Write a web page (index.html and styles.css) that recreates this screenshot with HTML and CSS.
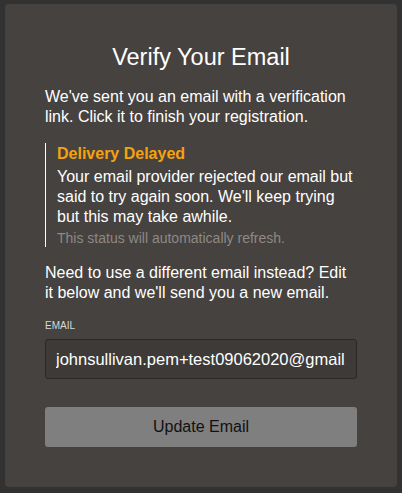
FILE: index.html
```html
<!DOCTYPE html>
<html lang="en">
    <head>
        <meta charset="UTF-8">
        <meta name="viewport" content="width=device-width, initial-scale=1.0">
        <title>Verify Your Email</title>
        <link rel="stylesheet" href="styles.css">
    </head>
    <body>
        <div class="card">
            <h1>Verify Your Email</h1>
            <p class="intro">We've sent you an email with a verification link. Click it to finish your registration.</p>
            <div class="status">
                <div class="statusTitle">Delivery Delayed</div>
                <p class="statusText">Your email provider rejected our email but said to try again soon. We'll keep trying but this may take awhile.</p>
                <div class="statusNote">This status will automatically refresh.</div>
            </div>
            <p class="intro">Need to use a different email instead? Edit it below and we'll send you a new email.</p>
            <label class="label" for="email">EMAIL</label>
            <input class="field" id="email" type="text" value="johnsullivan.pem+test09062020@gmail.com">
            <button class="button">Update Email</button>
        </div>
    </body>
</html>
```

FILE: styles.css
```css
body {
    margin: 0;
    background: #323232;
    font-family: "Liberation Sans", Arial, sans-serif;
    color: #fff;
}

.card {
    margin: 4px 5px 6px 5px;
    height: 483px;
    box-sizing: border-box;
    background: #46423f;
    border-radius: 4px;
    padding: 40px 40px 0 40px;
    display: flex;
    flex-direction: column;
}

h1 {
    margin: 0 0 17px 0;
    font-size: 23.5px;
    font-weight: normal;
    text-align: center;
    line-height: 26px;
}

.intro {
    margin: 0;
    font-size: 16px;
    line-height: 20px;
}

.status {
    margin: 16px 0 16px 0;
    border-left: 1px solid #fff;
    padding: 1px 0 1px 11px;
}

.statusTitle {
    color: #f5a20f;
    font-weight: bold;
    font-size: 16px;
    line-height: 19px;
    margin-bottom: 4px;
}

.statusText {
    margin: 0 0 3px 0;
    font-size: 16px;
    line-height: 20px;
}

.statusNote {
    color: #8c8986;
    font-size: 14px;
    line-height: 16px;
}

.label {
    margin-top: 17px;
    font-size: 10px;
    color: #d8d8d8;
    line-height: 11px;
}

.field {
    margin-top: 8px;
    height: 40px;
    box-sizing: border-box;
    background: #3d3a37;
    border: 1px solid #2b2927;
    border-radius: 3px;
    padding: 0 10px;
    color: #fff;
    font-family: inherit;
    font-size: 16.5px;
    outline: none;
}

.button {
    margin-top: 28px;
    height: 40px;
    background: #7f7f7f;
    border: none;
    border-radius: 3px;
    color: #111;
    font-family: inherit;
    font-size: 16px;
}
```
